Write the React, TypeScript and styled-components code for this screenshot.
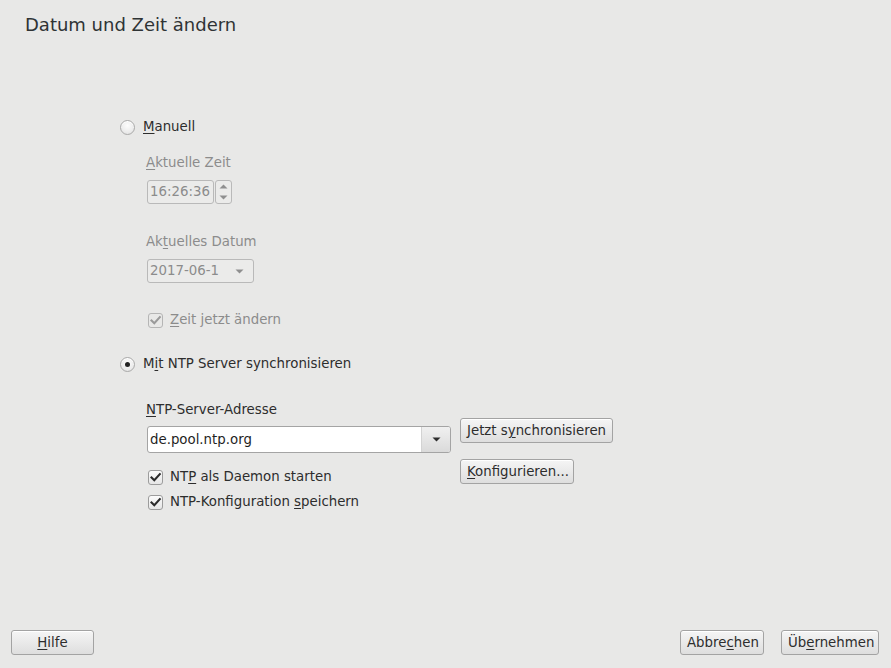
import React from "react";
import styled, { createGlobalStyle } from "styled-components";

const Global = createGlobalStyle`
  html, body { margin: 0; padding: 0; background: #e8e8e7; }
  body { font-family: "DejaVu Sans", "Liberation Sans", sans-serif; font-size: 13.33px; color: #2d2d2d; }
  * { box-sizing: border-box; }
`;

const Page = styled.div`
  width: 891px;
  height: 668px;
  display: flex;
  flex-direction: column;
  background: #e8e8e7;
`;

const Title = styled.h1`
  margin: 0;
  padding: 13px 0 0 25px;
  font-size: 18px;
  font-weight: normal;
  line-height: 24px;
  color: #2f3335;
`;

const Content = styled.div`
  flex: 1;
  display: flex;
  flex-direction: column;
  align-items: flex-start;
  padding: 81px 0 0 120px;
`;

const Mn = styled.span`
  text-decoration: underline;
  text-underline-offset: 2px;
`;

const Row = styled.label<{ $mt?: number; $gap?: number; $disabled?: boolean }>`
  display: flex;
  align-items: center;
  gap: ${(p) => p.$gap ?? 8}px;
  height: 18px;
  line-height: 18px;
  margin-top: ${(p) => p.$mt ?? 0}px;
  color: ${(p) => (p.$disabled ? "#8c8c8c" : "#2d2d2d")};
  white-space: nowrap;
`;

const RadioCircle = styled.span<{ $checked?: boolean }>`
  width: 15px;
  height: 15px;
  border-radius: 50%;
  border: 1px solid #a9a9a9;
  background: radial-gradient(circle at 50% 35%, #fcfcfc 0%, #ececec 60%, #dcdcdc 100%);
  box-shadow: inset 0 1px 0 #fff;
  display: flex;
  align-items: center;
  justify-content: center;
  flex: none;
  &::after {
    content: "";
    display: ${(p) => (p.$checked ? "block" : "none")};
    width: 5px;
    height: 5px;
    border-radius: 50%;
    background: #232323;
  }
`;

const CheckBox = styled.span<{ $disabled?: boolean }>`
  width: 15px;
  height: 15px;
  border-radius: 3px;
  border: 1px solid ${(p) => (p.$disabled ? "#b5b5b5" : "#9c9c9c")};
  background: ${(p) => (p.$disabled ? "#e8e8e7" : "linear-gradient(#fbfbfb, #e6e6e6)")};
  display: flex;
  align-items: center;
  justify-content: center;
  flex: none;
  margin-left: 28px;
`;

const Label = styled.div<{ $mt: number; $indent?: number; $disabled?: boolean }>`
  margin-top: ${(p) => p.$mt}px;
  margin-left: ${(p) => p.$indent ?? 26}px;
  height: 18px;
  line-height: 18px;
  color: ${(p) => (p.$disabled ? "#8c8c8c" : "#2d2d2d")};
`;

const SpinWrap = styled.div<{ $mt: number }>`
  margin-top: ${(p) => p.$mt}px;
  margin-left: 27px;
  display: flex;
  height: 24px;
  gap: 1px;
`;

const DisabledField = styled.div<{ $w: number }>`
  width: ${(p) => p.$w}px;
  height: 24px;
  border: 1px solid #b9b9b9;
  border-radius: 3px;
  background: #ebebea;
  color: #8c8c8c;
  line-height: 22px;
  padding-left: 2px;
  display: flex;
  align-items: center;
  justify-content: space-between;
  padding-right: 9px;
`;

const SpinButtons = styled.div`
  width: 17px;
  height: 24px;
  border: 1px solid #b9b9b9;
  border-radius: 3px;
  display: flex;
  flex-direction: column;
  align-items: center;
  justify-content: space-around;
  background: #ebebea;
`;

const NtpBlock = styled.div`
  margin-top: 28px;
  margin-left: 26px;
  display: grid;
  grid-template-columns: 304px auto;
  column-gap: 10px;
  align-items: start;
`;

const LeftCol = styled.div`
  display: flex;
  flex-direction: column;
  align-items: flex-start;
`;

const RightCol = styled.div`
  display: flex;
  flex-direction: column;
  align-items: flex-start;
  gap: 16px;
  padding-top: 17px;
`;

const Combo = styled.div`
  margin-top: 7px;
  margin-left: 1px;
  width: 304px;
  height: 27px;
  border: 1px solid #a4a4a4;
  border-radius: 3px;
  background: #fff;
  display: flex;
  overflow: hidden;
`;

const ComboText = styled.div`
  flex: 1;
  padding-left: 2px;
  line-height: 25px;
  color: #1f1f1f;
`;

const ComboButton = styled.div`
  width: 29px;
  border-left: 1px solid #d3d3d3;
  background: linear-gradient(#f0f0f0, #dadada);
  display: flex;
  align-items: center;
  justify-content: center;
`;

const Button = styled.button<{ $w?: number }>`
  font-family: inherit;
  font-size: 13.33px;
  color: #2d2d2d;
  height: 25px;
  ${(p) => (p.$w ? `width: ${p.$w}px;` : "")}
  padding: 0 6px;
  border: 1px solid #a3a3a3;
  border-radius: 3px;
  background: linear-gradient(#f5f5f5, #dedede);
  box-shadow: inset 0 1px 0 #fff;
  white-space: nowrap;
  line-height: 21px;
`;

const CheckRows = styled.div`
  margin-top: 15px;
  margin-left: -26px;
  display: flex;
  flex-direction: column;
  gap: 7px;
`;

const Footer = styled.div`
  display: flex;
  align-items: center;
  padding: 0 12px 13px 11px;
  gap: 17px;
`;

const Spacer = styled.div`
  flex: 1;
`;

const Check = ({ color }: { color: string }) => (
  <svg width="13" height="13" viewBox="0 0 13 13">
    <path d="M2.5 6.5 L5.3 9.3 L10.8 3.2" fill="none" stroke={color} strokeWidth="2.1" strokeLinecap="square" />
  </svg>
);

const Tri = ({ color, up }: { color: string; up?: boolean }) => (
  <svg width="9" height="5" viewBox="0 0 9 5">
    <path d={up ? "M0.5 4.5 L4.5 0.5 L8.5 4.5 Z" : "M0.5 0.5 L8.5 0.5 L4.5 4.5 Z"} fill={color} />
  </svg>
);

export default function App() {
  return (
    <Page>
      <Global />
      <Title>Datum und Zeit ändern</Title>
      <Content>
        <Row>
          <RadioCircle />
          <span>
            <Mn>M</Mn>anuell
          </span>
        </Row>
        <Label $mt={18} $disabled>
          <Mn>A</Mn>ktuelle Zeit
        </Label>
        <SpinWrap $mt={8}>
          <DisabledField $w={67}>16:26:36</DisabledField>
          <SpinButtons>
            <Tri color="#8f8f8f" up />
            <Tri color="#8f8f8f" />
          </SpinButtons>
        </SpinWrap>
        <Label $mt={29} $disabled>
          Ak<Mn>t</Mn>uelles Datum
        </Label>
        <SpinWrap $mt={8}>
          <DisabledField $w={107}>
            <span>2017-06-1</span>
            <Tri color="#8f8f8f" />
          </DisabledField>
        </SpinWrap>
        <Row $mt={28} $gap={7} $disabled>
          <CheckBox $disabled>
            <Check color="#9a9a9a" />
          </CheckBox>
          <span>
            <Mn>Z</Mn>eit jetzt ändern
          </span>
        </Row>
        <Row $mt={26}>
          <RadioCircle $checked />
          <span>
            M<Mn>i</Mn>t NTP Server synchronisieren
          </span>
        </Row>
        <NtpBlock>
          <LeftCol>
            <Label $mt={0} $indent={0}>
              <Mn>N</Mn>TP-Server-Adresse
            </Label>
            <Combo>
              <ComboText>de.pool.ntp.org</ComboText>
              <ComboButton>
                <Tri color="#2c2c2c" />
              </ComboButton>
            </Combo>
            <CheckRows>
              <Row $gap={7}>
                <CheckBox>
                  <Check color="#2b2b2b" />
                </CheckBox>
                <span>
                  NT<Mn>P</Mn> als Daemon starten
                </span>
              </Row>
              <Row $gap={7}>
                <CheckBox>
                  <Check color="#2b2b2b" />
                </CheckBox>
                <span>
                  NTP-Konfiguration <Mn>s</Mn>peichern
                </span>
              </Row>
            </CheckRows>
          </LeftCol>
          <RightCol>
            <Button>
              Jetzt s<Mn>y</Mn>nchronisieren
            </Button>
            <Button $w={114}>
              <Mn>K</Mn>onfigurieren...
            </Button>
          </RightCol>
        </NtpBlock>
      </Content>
      <Footer>
        <Button $w={83}>
          <Mn>H</Mn>ilfe
        </Button>
        <Spacer />
        <Button $w={84}>
          Abbre<Mn>c</Mn>hen
        </Button>
        <Button $w={98}>
          Üb<Mn>e</Mn>rnehmen
        </Button>
      </Footer>
    </Page>
  );
}
